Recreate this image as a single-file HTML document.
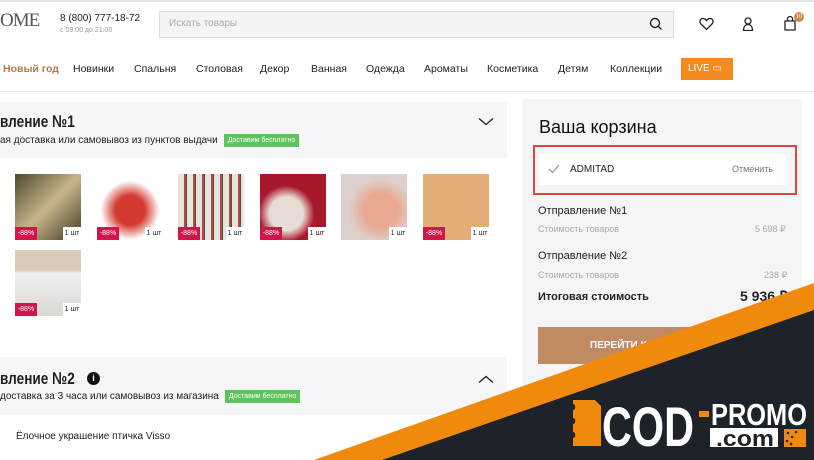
<!DOCTYPE html>
<html><head><meta charset="utf-8">
<style>
*{margin:0;padding:0;box-sizing:border-box}
body{width:814px;height:460px;overflow:hidden;background:#fff;font-family:"Liberation Sans",sans-serif;color:#222;position:relative}
.a{position:absolute}
.nav span{position:absolute;top:63px;font-size:10.5px;color:#222}
.prod{position:absolute;width:66px;height:66px}
.disc{position:absolute;left:0;bottom:0;width:22px;height:13px;background:#d4144a;color:#fff;font-size:7px;line-height:13px;text-align:center}
.qty{position:absolute;right:0;bottom:0;width:18px;height:13px;background:#fff;font-size:7px;line-height:13px;color:#222;white-space:nowrap;text-align:center}
.green{display:inline-block;background:#5cc45a;color:#fff;font-size:7px;padding:3px 4px;vertical-align:middle;margin-left:6px;font-weight:normal}
.ttl{font-size:17px;font-weight:bold;color:#222;transform:scaleX(.8);transform-origin:0 0;white-space:nowrap}
</style></head><body>
<div class="a" style="left:0;top:0;width:814px;height:2px;background:#e5e5e5"></div>
<div class="a" style="left:0;top:10px;font-family:'Liberation Serif',serif;font-size:19px;color:#555;letter-spacing:-1px">OME</div>
<div class="a" style="left:60px;top:13px;font-size:10px">8 (800) 777-18-72</div>
<div class="a" style="left:60px;top:27px;font-size:7px;color:#999">с 09:00 до 21:00</div>
<div class="a" style="left:159px;top:11px;width:515px;height:27px;background:#f4f4f6;border:1px solid #ddd"></div>
<div class="a" style="left:169px;top:18px;font-size:10px;color:#aaa">Искать товары</div>
<svg class="a" style="left:649px;top:17px" width="14" height="14" viewBox="0 0 14 14"><circle cx="6" cy="6" r="4.5" fill="none" stroke="#222" stroke-width="1.4"/><path d="M9.5 9.5L12.5 12.5" stroke="#222" stroke-width="1.4"/></svg>
<svg class="a" style="left:699px;top:17px" width="15" height="14" viewBox="0 0 15 14"><path d="M7.5 12.5L2 7C0 5 1 1.5 4 1.5c1.7 0 2.7 1 3.5 2 .8-1 1.8-2 3.5-2 3 0 4 3.5 2 5.5z" fill="none" stroke="#222" stroke-width="1.3"/></svg>
<svg class="a" style="left:742px;top:17px" width="12" height="14" viewBox="0 0 12 14"><circle cx="6" cy="4" r="3" fill="none" stroke="#222" stroke-width="1.3"/><path d="M1.5 13.5c0-4 2-6 4.5-6s4.5 2 4.5 6z" fill="none" stroke="#222" stroke-width="1.3"/></svg>
<svg class="a" style="left:783px;top:15px" width="16" height="16" viewBox="0 0 16 16"><path d="M2 6h10v9H2z" fill="none" stroke="#222" stroke-width="1.3"/><path d="M4.5 6V4a2.5 2.5 0 015 0v2" fill="none" stroke="#222" stroke-width="1.3"/></svg>
<div class="a" style="left:794px;top:12px;width:10px;height:10px;border-radius:5px;background:#c9874f;color:#fff;font-size:6px;line-height:10px;text-align:center">10</div>
<div class="nav">
<span style="left:3px;color:#b47a4c;font-weight:bold">Новый год</span>
<span style="left:73px">Новинки</span>
<span style="left:134px">Спальня</span>
<span style="left:196px">Столовая</span>
<span style="left:260px">Декор</span>
<span style="left:311px">Ванная</span>
<span style="left:366px">Одежда</span>
<span style="left:424px">Ароматы</span>
<span style="left:487px">Косметика</span>
<span style="left:558px">Детям</span>
<span style="left:610px">Коллекции</span>
</div>
<div class="a" style="left:681px;top:58px;width:52px;height:22px;background:#f48a1f;color:#fff;font-size:10px;line-height:22px;padding-left:7px">LIVE ▭</div>
<div class="a" style="left:0;top:91px;width:814px;height:1px;background:#e5e5e5"></div>

<div class="a" style="left:0;top:102px;width:507px;height:56px;background:#f6f5f7"></div>
<div class="a ttl" style="left:0;top:112px">вление №1</div>
<div class="a" style="left:0;top:134px;font-size:10px;white-space:nowrap">ая доставка или самовывоз из пунктов выдачи<span class="green">Доставим бесплатно</span></div>
<svg class="a" style="left:478px;top:117px" width="16" height="10" viewBox="0 0 16 10"><path d="M1 1.5l7 6 7-6" fill="none" stroke="#222" stroke-width="1.3"/></svg>

<div class="prod" style="left:15px;top:174px;background:linear-gradient(135deg,#4a4a2e,#c9b58a 50%,#3a3a22)"><div class="disc">-88%</div><div class="qty">1 шт</div></div>
<div class="prod" style="left:97px;top:174px;background:radial-gradient(circle at 50% 55%,#d33a32 30%,#fff 60%)"><div class="disc">-88%</div><div class="qty">1 шт</div></div>
<div class="prod" style="left:178px;top:174px;background:repeating-linear-gradient(90deg,#e8e2dc 0 6px,#b84646 6px 8px,#3a5a3a 8px 9px),#ddd"><div class="disc">-88%</div><div class="qty">1 шт</div></div>
<div class="prod" style="left:260px;top:174px;background:radial-gradient(circle at 40% 60%,#e7ddd5 30%,#a8182c 50%)"><div class="disc">-88%</div><div class="qty">1 шт</div></div>
<div class="prod" style="left:341px;top:174px;background:radial-gradient(circle at 60% 55%,#e9a88f 30%,#ddd0cc 60%)"><div class="qty">1 шт</div></div>
<div class="prod" style="left:423px;top:174px;background:#e3ad78"><div class="disc">-88%</div><div class="qty">1 шт</div></div>
<div class="prod" style="left:15px;top:250px;background:linear-gradient(180deg,#d9cbb8 30%,#efefed 35%,#d8d8d4)"><div class="disc">-88%</div><div class="qty">1 шт</div></div>

<div class="a" style="left:0;top:357px;width:507px;height:58px;background:#f6f5f7"></div>
<div class="a ttl" style="left:0;top:369px">вление №2</div>
<div class="a" style="left:87px;top:372px;width:13px;height:13px;border-radius:7px;background:#111;color:#fff;font-size:9px;font-weight:bold;line-height:13px;text-align:center">i</div>
<div class="a" style="left:0;top:390px;font-size:10px;white-space:nowrap">доставка за 3 часа или самовывоз из магазина<span class="green">Доставим бесплатно</span></div>
<svg class="a" style="left:478px;top:374px" width="16" height="10" viewBox="0 0 16 10"><path d="M1 8.5l7-6 7 6" fill="none" stroke="#222" stroke-width="1.3"/></svg>
<div class="a" style="left:16px;top:431px;font-size:10px">Ёлочное украшение птичка Visso</div>

<div class="a" style="left:522px;top:99px;width:280px;height:330px;background:#f5f4f6;border-radius:4px"></div>
<div class="a" style="left:539px;top:117px;font-size:18px;color:#111">Ваша корзина</div>
<div class="a" style="left:533px;top:145px;width:264px;height:50px;border:2px solid #e0463c"></div>
<div class="a" style="left:539px;top:154px;width:247px;height:31px;background:#fff"></div>
<svg class="a" style="left:548px;top:164px" width="12" height="10" viewBox="0 0 12 10"><path d="M1 5l3.5 3.5L11 1" fill="none" stroke="#888" stroke-width="1"/></svg>
<div class="a" style="left:570px;top:164px;font-size:10px;color:#222">ADMITAD</div>
<div class="a" style="left:732px;top:164px;font-size:9px;color:#777">Отменить</div>
<div class="a" style="left:538px;top:205px;font-size:11px">Отправление №1</div>
<div class="a" style="left:538px;top:224px;font-size:9px;color:#aaa">Стоимость товаров</div>
<div class="a" style="left:755px;top:224px;font-size:9px;color:#aaa">5 698 ₽</div>
<div class="a" style="left:538px;top:250px;font-size:11px">Отправление №2</div>
<div class="a" style="left:538px;top:270px;font-size:9px;color:#aaa">Стоимость товаров</div>
<div class="a" style="left:764px;top:270px;font-size:9px;color:#aaa">238 ₽</div>
<div class="a" style="left:538px;top:291px;font-size:11px;font-weight:bold">Итоговая стоимость</div>
<div class="a" style="left:740px;top:288px;font-size:14px;font-weight:bold">5 936 ₽</div>
<div class="a" style="left:538px;top:327px;width:248px;height:37px;background:#c08a62;color:#fff;font-size:10px;font-weight:bold;line-height:37px;padding-left:52px">ПЕРЕЙТИ К ОФОРМЛЕНИЮ</div>

<svg class="a" style="left:0;top:0" width="814" height="460" viewBox="0 0 814 460">
<polygon points="314,460 814,283 814,460" fill="#f08a0c"/>
<polygon points="382,460 814,310 814,460" fill="#1e2329"/>
<path d="M573 400h22l6 6v40h-28v-8c3 0 3-6 0-6v-8c3 0 3-6 0-6v-8c3 0 3-6 0-6z" fill="#f08a0c"/>
<rect x="710" y="428" width="68" height="19" fill="#fff"/>
<rect x="784" y="429" width="22" height="18" fill="#f08a0c"/>
<g fill="#1e2329"><circle cx="788" cy="433" r="1.3"/><circle cx="792" cy="437" r="1.3"/><circle cx="787" cy="441" r="1.3"/><circle cx="796" cy="432" r="1.3"/><circle cx="791" cy="444" r="1.3"/></g>
<text x="602" y="446" font-family="Liberation Sans" font-weight="bold" font-size="56" fill="#fff" textLength="92" lengthAdjust="spacingAndGlyphs">COD</text>
<rect x="699" y="411" width="10" height="6" fill="#f08a0c"/>
<text x="711" y="425" font-family="Liberation Sans" font-weight="bold" font-size="31" fill="#fff" textLength="96" lengthAdjust="spacingAndGlyphs">PROMO</text>
<text x="716" y="446" font-family="Liberation Sans" font-weight="bold" font-size="22" fill="#1e2329" textLength="58" lengthAdjust="spacingAndGlyphs">.com</text>
</svg>
</body></html>
